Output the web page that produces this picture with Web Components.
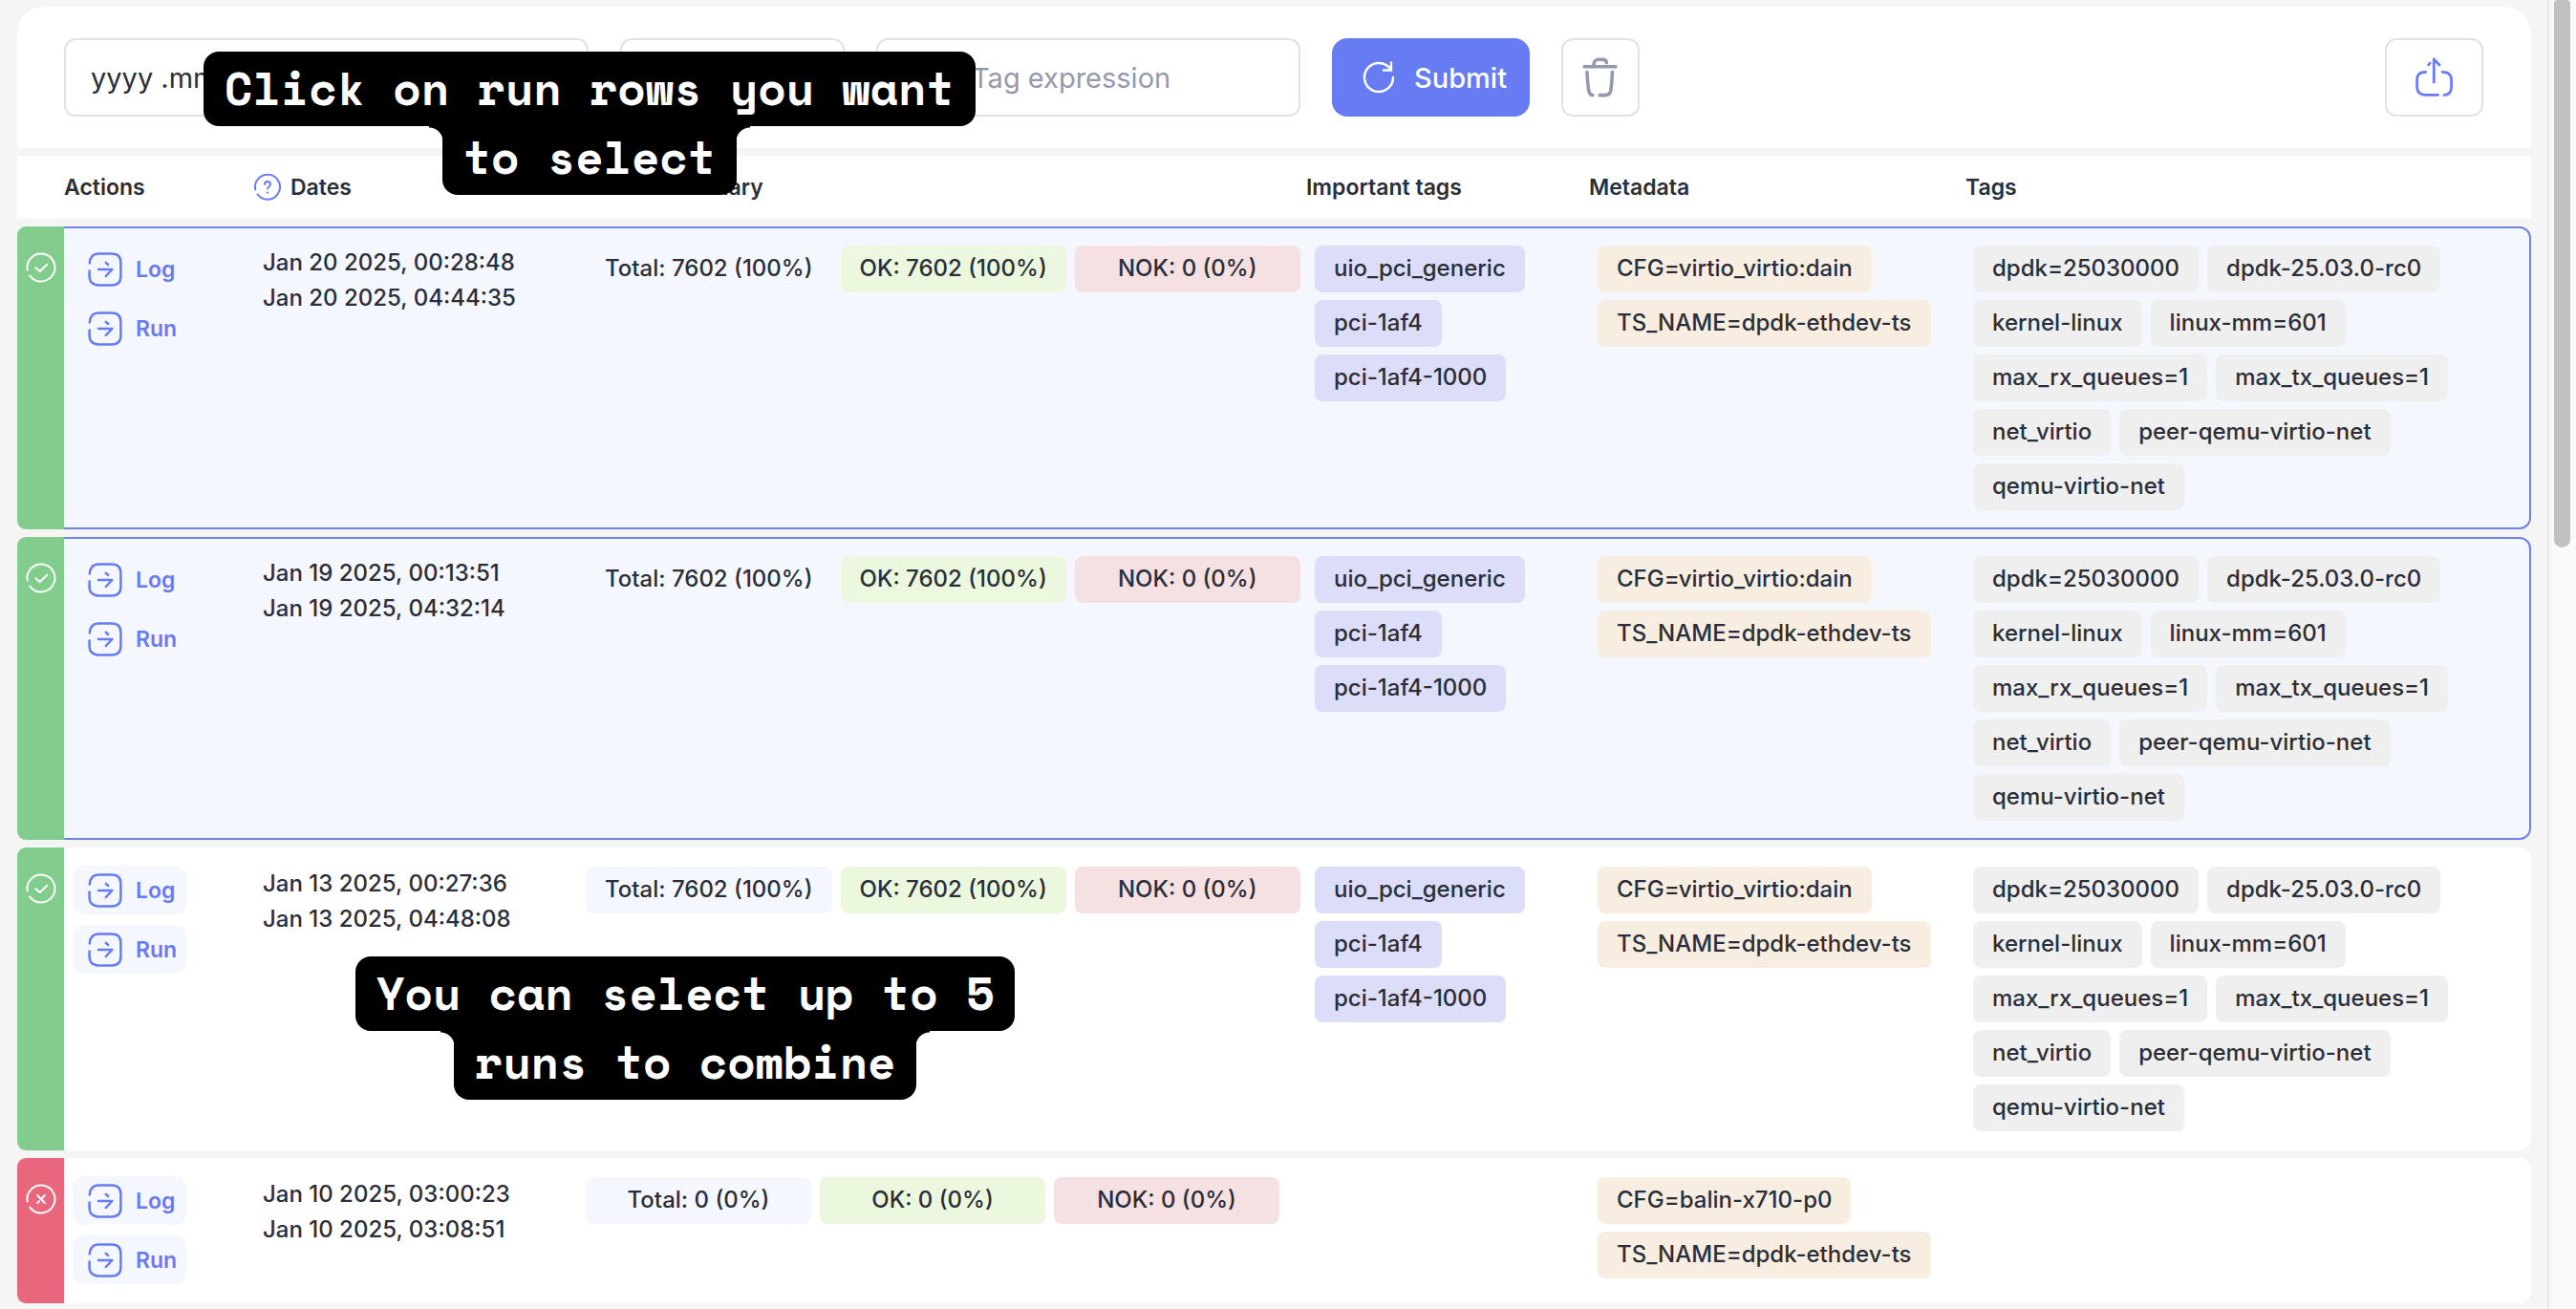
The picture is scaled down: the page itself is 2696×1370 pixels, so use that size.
<!DOCTYPE html>
<html lang="en">
<head>
<meta charset="utf-8">
<title>Runs</title>
<style>
  :root {
    --page: #f5f5f5;
    --surface: #ffffff;
    --ink: #2b2e38;
    --muted: #9499ad;
    --line: #e1e2e6;
    --primary: #677bf2;
    --tint: #f4f8fe;
    --ok: #82cd8d;
    --fail: #e8677d;
  }
  html, body { height: 100%; }
  body {
    margin: 0;
    background: var(--page);
    color: var(--ink);
    font-family: Inter, "Liberation Sans", sans-serif;
    overflow: hidden;
  }
</style>
</head>
<body>
<runs-app></runs-app>

<script>
const define = (name, html, setup) => {
  const template = document.createElement('template');
  template.innerHTML = html;
  customElements.define(name, class extends HTMLElement {
    constructor() {
      super();
      this.attachShadow({ mode: 'open' }).append(template.content.cloneNode(true));
    }
    connectedCallback() { if (setup) setup(this, this.shadowRoot); }
  });
};

const ICONS = {
  ok: ['0 0 32 32', 2, '<path d="M1.7 18.5A14.5 14.5 0 1 1 4.3 24.6"/><path d="M10.3 16.2 14.7 20 22.3 12.7"/>'],
  fail: ['0 0 32 32', 2, '<path d="M1.7 18.5A14.5 14.5 0 1 1 4.3 24.6"/><path d="M12.2 12 19.8 20M19.8 12 16.8 15.2M14 18.2 12.2 20"/>'],
  help: ['0 0 28 28', 2, '<path d="M1.3 16.5A13 13 0 1 1 3.6 21.5"/><path d="M11 11C11 7 17 7 17 11C17 13.2 14 13.4 14 15.6M14 19.4V19.8"/>'],
  open: ['0 0 36 36', 2.5, '<path d="M1.8 11.5C2.3 5 5.5 1.5 11 1.5H25C31 1.5 34.4 5 34.4 11V25C34.4 31 31 34.4 25 34.4H11C5 34.4 1.6 31 1.6 25V19.5"/><path d="M11 18H25.4L18.8 25M18.8 10.8 21.2 13"/>'],
  refresh: ['0 0 34 34', 2.4, '<path d="M32 17A15 15 0 1 1 30 9.5"/><path d="M30 1.5V9.5H22"/>'],
  trash: ['0 0 38 42', 3.6, '<path d="M2 9.7H35M11.8 8.5C12.4 4 13.4 2.3 16.5 2.3H21.5C24 2.3 25.2 3.6 25.4 5.5"/><path d="M5 15.5C5.4 24 6 31 7 35.5C7.6 38 8.8 39.4 10.8 39.6M18.2 39.6H23.5C27.6 39.6 29.3 38 29.9 34.5C30.7 29 31.2 22 31.4 15.5"/>'],
  share: ['0 0 40 42', 2.7, '<path d="M10.8 15.4C4.5 15.4 1.6 18 1.6 23.5V30.5C1.6 36.5 4.5 39.4 10.5 39.4H23.5"/><path d="M28.2 15.4C34.8 15.4 37.6 18.5 37.6 24V31C37.6 36.6 35 39.4 30 39.4"/><path d="M19.3 26V1.8L25 8M13.6 8 15.2 6"/>']
};

/* Outline icon chosen by name; it takes its size from the host box. */
define('ui-icon', `
  <style>
    :host { display: inline-block; flex: none; }
    svg { display: block; width: 100%; height: 100%; }
  </style>
  <svg aria-hidden="true" fill="none" stroke="currentColor" stroke-linecap="round" stroke-linejoin="round"></svg>
`, (el, root) => {
  const [box, stroke, shape] = ICONS[el.getAttribute('name')];
  const svg = root.querySelector('svg');
  svg.setAttribute('viewBox', box);
  svg.setAttribute('stroke-width', stroke);
  svg.innerHTML = shape;
});

define('run-chip', `
  <style>
    :host {
      display: inline-block; box-sizing: border-box; height: 49px; padding: 0 20px;
      border-radius: 8px; background: #efefef;
      font-size: 24px; font-weight: 500; line-height: 48px;
      text-align: center; white-space: nowrap;
    }
    :host([kind="total"]) { background: var(--tint); min-width: 236px; }
    :host([kind="ok"]) { background: #ebf8de; min-width: 236px; }
    :host([kind="nok"]) { background: #f5e0e2; min-width: 236px; }
    :host([kind="important"]) { background: #dcddf8; }
    :host([kind="meta"]) { background: #f7eee1; }
  </style>
  <slot></slot>
`);

define('chip-list', `
  <style>
    :host { display: flex; flex-wrap: wrap; align-items: flex-start; gap: 8px 9px; }
    :host([single]) { flex-wrap: nowrap; }
  </style>
  <slot></slot>
`);

define('action-link', `
  <style>
    :host { display: block; }
    a {
      display: flex; align-items: center; gap: 14px; box-sizing: border-box;
      height: 51px; padding: 0 12px 0 16px; border-radius: 12px;
      background: var(--tint); color: var(--primary);
      font-size: 23px; font-weight: 600; text-decoration: none;
    }
    ui-icon { width: 36px; height: 36px; }
  </style>
  <a href="#"><ui-icon name="open"></ui-icon><span><slot></slot></span></a>
`);

define('runs-toolbar', `
  <style>
    :host { display: block; }
    form {
      display: flex; align-items: center; gap: 33px; box-sizing: border-box;
      height: 148px; padding: 0 50px 0 49px; background: var(--surface);
      border-radius: 28px 28px 0 0;
    }
    input, button {
      box-sizing: border-box; height: 82px; margin: 0; font: inherit; font-size: 29px;
      border: 2px solid var(--line); border-radius: 12px; background: var(--surface); color: var(--ink);
    }
    input { padding: 0 26px; }
    input::placeholder { color: var(--muted); opacity: 1; }
    .range { width: 549px; }
    .mode { width: 235px; }
    .expr { width: 444px; padding-left: 98px; }
    button { display: flex; align-items: center; justify-content: center; padding: 0; }
    .submit {
      width: 207px; gap: 20px; padding: 0 24px 0 32px; justify-content: flex-start; border: 0; border-radius: 16px;
      background: var(--primary); color: #fff; font-weight: 500;
    }
    .submit ui-icon { width: 34px; height: 34px; }
    .clear { width: 82px; color: var(--muted); }
    .clear ui-icon { width: 38px; height: 42px; }
    .share { width: 103px; margin-left: auto; color: var(--primary); }
    .share ui-icon { width: 40px; height: 42px; }
  </style>
  <form>
    <input class="range" type="text" aria-label="Date range" value="yyyy .mm .dd">
    <input class="mode" type="text" aria-label="Mode">
    <input class="expr" type="text" aria-label="Tag expression" placeholder="Tag expression">
    <button class="submit" type="button"><ui-icon name="refresh"></ui-icon><span>Submit</span></button>
    <button class="clear" type="button" aria-label="Clear"><ui-icon name="trash"></ui-icon></button>
    <button class="share" type="button" aria-label="Share"><ui-icon name="share"></ui-icon></button>
  </form>
`);

const IMPORTANT = ['uio_pci_generic', 'pci-1af4', 'pci-1af4-1000'];
const META = ['CFG=virtio_virtio:dain', 'TS_NAME=dpdk-ethdev-ts'];
const TAGS = ['dpdk=25030000', 'dpdk-25.03.0-rc0', 'kernel-linux', 'linux-mm=601', 'max_rx_queues=1',
  'max_tx_queues=1', 'net_virtio', 'peer-qemu-virtio-net', 'qemu-virtio-net'];
const full = { state: 'ok', sum: ['7602 (100%)', '7602 (100%)', '0 (0%)'], important: IMPORTANT, meta: META, tags: TAGS };
const RUNS = [
  { ...full, selected: true, dates: ['Jan 20 2025, 00:28:48', 'Jan 20 2025, 04:44:35'] },
  { ...full, selected: true, dates: ['Jan 19 2025, 00:13:51', 'Jan 19 2025, 04:32:14'] },
  { ...full, dates: ['Jan 13 2025, 00:27:36', 'Jan 13 2025, 04:48:08'] },
  { state: 'fail', dates: ['Jan 10 2025, 03:00:23', 'Jan 10 2025, 03:08:51'], sum: ['0 (0%)', '0 (0%)', '0 (0%)'],
    important: [], meta: ['CFG=balin-x710-p0', 'TS_NAME=dpdk-ethdev-ts'], tags: [] }
];
const chips = (items, kind) => items.length
  ? `<chip-list>${items.map(t => `<run-chip kind="${kind}">${t}</run-chip>`).join('')}</chip-list>` : '';

define('runs-table', `
  <style>
    :host { display: block; }
    table { width: 100%; table-layout: fixed; border-collapse: separate; border-spacing: 0 8px; }
    .c-state { width: 49px; } .c-actions { width: 199px; } .c-dates { width: 338px; }
    .c-summary { width: 763px; } .c-important { width: 296px; } .c-meta { width: 394px; }
    th {
      height: 66px; padding: 0; background: var(--surface);
      font-size: 23px; font-weight: 600; text-align: left;
    }
    th.summary { padding-left: 88px; }
    th div { display: flex; align-items: center; gap: 10px; }
    th ui-icon { width: 28px; height: 28px; color: var(--primary); }
    td {
      padding: 18px 0 18px 9px; vertical-align: top; background: var(--surface);
      border: solid transparent; border-width: 2px 0;
    }
    td:last-child { padding-left: 8px; padding-right: 18px; border-right-width: 2px; border-radius: 0 12px 12px 0; }
    td.act, td.dates { padding-top: 17px; }
    td.state { padding: 25px 0 0 9px; border-radius: 9px 0 0 9px; color: #fff; }
    tr.ok td.state { background: var(--ok); }
    tr.fail td.state { background: var(--fail); }
    td.state ui-icon { width: 32px; height: 32px; display: block; }
    tr.selected td:not(.state) { background: var(--tint); border-color: #7182e6; }
    .actions { display: flex; flex-direction: column; gap: 11px; width: 119px; }
    td.dates { font-size: 24px; font-weight: 500; line-height: 37px; }
    time { display: block; }
  </style>
  <table>
    <colgroup><col class="c-state"><col class="c-actions"><col class="c-dates"><col class="c-summary"><col class="c-important"><col class="c-meta"><col></colgroup>
    <thead><tr>
      <th></th><th>Actions</th><th><div><ui-icon name="help"></ui-icon>Dates</div></th>
      <th class="summary">Summary</th><th>Important tags</th><th>Metadata</th><th>Tags</th>
    </tr></thead>
    <tbody></tbody>
  </table>
`, (el, root) => {
  root.querySelector('tbody').innerHTML = RUNS.map(r => `
    <tr class="${r.state}${r.selected ? ' selected' : ''}">
      <td class="state"><ui-icon name="${r.state}"></ui-icon></td>
      <td class="act"><div class="actions"><action-link>Log</action-link><action-link>Run</action-link></div></td>
      <td class="dates">${r.dates.map(d => `<time>${d}</time>`).join('')}</td>
      <td><chip-list single>
        <run-chip kind="total">Total: ${r.sum[0]}</run-chip>
        <run-chip kind="ok">OK: ${r.sum[1]}</run-chip>
        <run-chip kind="nok">NOK: ${r.sum[2]}</run-chip>
      </chip-list></td>
      <td>${chips(r.important, 'important')}</td>
      <td>${chips(r.meta, 'meta')}</td>
      <td>${chips(r.tags, 'tag')}</td>
    </tr>`).join('');
});

/* Two-line caption that floats over the page; the lower line is narrower and joined by inner curves. */
define('float-caption', `
  <style>
    :host {
      position: absolute; display: flex; flex-direction: column; align-items: center;
      color: #fff; font-family: "Space Mono", "Liberation Mono", monospace;
      font-size: 48px; font-weight: 700; white-space: nowrap;
    }
    .top, .bottom { padding: 0 22px; background: #000; }
    .top { height: 78px; line-height: 76px; border-radius: 16px; }
    .bottom { position: relative; height: 72px; line-height: 64px; border-radius: 0 0 16px 16px; }
    .bottom::before, .bottom::after { content: ""; position: absolute; top: 0; width: 14px; height: 16px; }
    .bottom::before { right: 100%; background: radial-gradient(circle at 0 100%, transparent 14px, #000 15px); }
    .bottom::after { left: 100%; background: radial-gradient(circle at 100% 100%, transparent 14px, #000 15px); }
  </style>
  <div class="top"><slot name="top"></slot></div>
  <div class="bottom"><slot name="bottom"></slot></div>
`);

define('scroll-rail', `
  <style>
    :host { display: block; box-sizing: border-box; width: 30px; border-left: 2px solid #e8e8e8; background: #fafafa; }
    div { width: 17px; height: 573px; margin-left: 5px; border-radius: 4px 4px 9px 9px; background: #c1c1c1; }
  </style>
  <div></div>
`);

define('runs-app', `
  <style>
    :host { display: flex; height: 100%; position: relative; }
    main { flex: 1; min-width: 0; padding: 7px 17px 0 18px; }
    .first { left: 213px; top: 54px; }
    .second { left: 372px; top: 1001px; }
  </style>
  <main>
    <runs-toolbar></runs-toolbar>
    <runs-table></runs-table>
  </main>
  <scroll-rail></scroll-rail>
  <float-caption class="first"><span slot="top">Click on run rows you want</span><span slot="bottom">to select</span></float-caption>
  <float-caption class="second"><span slot="top">You can select up to 5</span><span slot="bottom">runs to combine</span></float-caption>
`);
</script>
</body>
</html>
